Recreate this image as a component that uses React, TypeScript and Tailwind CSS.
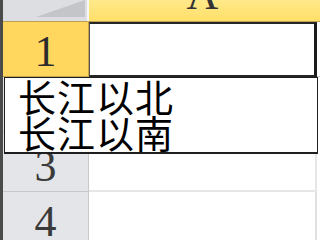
const serif = { fontFamily: '"Liberation Serif", "DejaVu Serif", serif' };

function RowHead({ label, h, active }: { label: string; h: string; active?: boolean }) {
  return (
    <div
      className={`${h} flex w-[86px] shrink-0 items-end justify-center border-b border-r pb-[2px] ${
        active
          ? "border-[#c9a446] bg-[#ffd75f] text-[#2b2b2b]"
          : "border-[#c6c8cc] bg-[#e3e5e8] text-[#3a3a3a]"
      }`}
    >
      <span className="text-[44px] leading-none" style={serif}>
        {label}
      </span>
    </div>
  );
}

export default function App() {
  return (
    <div className="relative flex h-[240px] w-[320px] overflow-hidden bg-white">
      <div className="w-[3px] shrink-0 bg-[#4b4b4b]" />

      <div className="flex flex-1 flex-col">
        {/* column header */}
        <div className="flex h-[22px] shrink-0 border-b border-[#c0a050]">
          <div className="relative w-[86px] shrink-0 border-r-2 border-[#f4f5f6] bg-[#dcdee2]">
            <svg className="absolute left-0 top-0" width="84" height="21">
              <polygon points="33,17 82,17 82,0" fill="#c3c5c9" />
            </svg>
          </div>
          <div className="flex flex-1 items-end justify-center overflow-hidden bg-gradient-to-b from-[#ffe98a] to-[#ffdf68]">
            <span className="mb-[4px] mr-[4px] text-[44px] leading-none text-[#333]" style={serif}>
              A
            </span>
          </div>
        </div>

        {/* row 1 */}
        <div className="flex">
          <RowHead label="1" h="h-[55px]" active />
          <div className="h-[55px] w-[228px] shrink-0 border-y-2 border-r-[3px] border-l border-y-[#262626] border-r-[#1a1a1a] border-l-[#555]" />
          <div className="flex-1 border-b border-[#d4d4d4]" />
        </div>

        {/* row 2 (hidden under list) */}
        <div className="flex">
          <RowHead label="" h="h-[56px]" />
          <div className="w-[228px] shrink-0 border-b border-r border-[#e2e2e2]" />
        </div>

        {/* row 3 */}
        <div className="flex">
          <RowHead label="3" h="h-[59px]" />
          <div className="w-[228px] shrink-0 border-b-2 border-r-2 border-[#e6e6e6]" />
        </div>

        {/* row 4 */}
        <div className="flex">
          <RowHead label="4" h="h-[55px]" />
          <div className="w-[228px] shrink-0 border-r-2 border-[#e0e0e0]" />
        </div>
      </div>

      {/* validation dropdown list */}
      <div
        className="absolute left-[4px] top-[77px] h-[77px] w-[314px] border border-b-2 border-[#1e1e1e] bg-white pl-[13px] text-[38px] leading-[36px] tracking-[1px] text-black"
        style={{ fontFamily: '"Noto Sans CJK SC", "Noto Sans CJK JP", sans-serif' }}
      >
        <div>长江以北</div>
        <div>长江以南</div>
      </div>
    </div>
  );
}
